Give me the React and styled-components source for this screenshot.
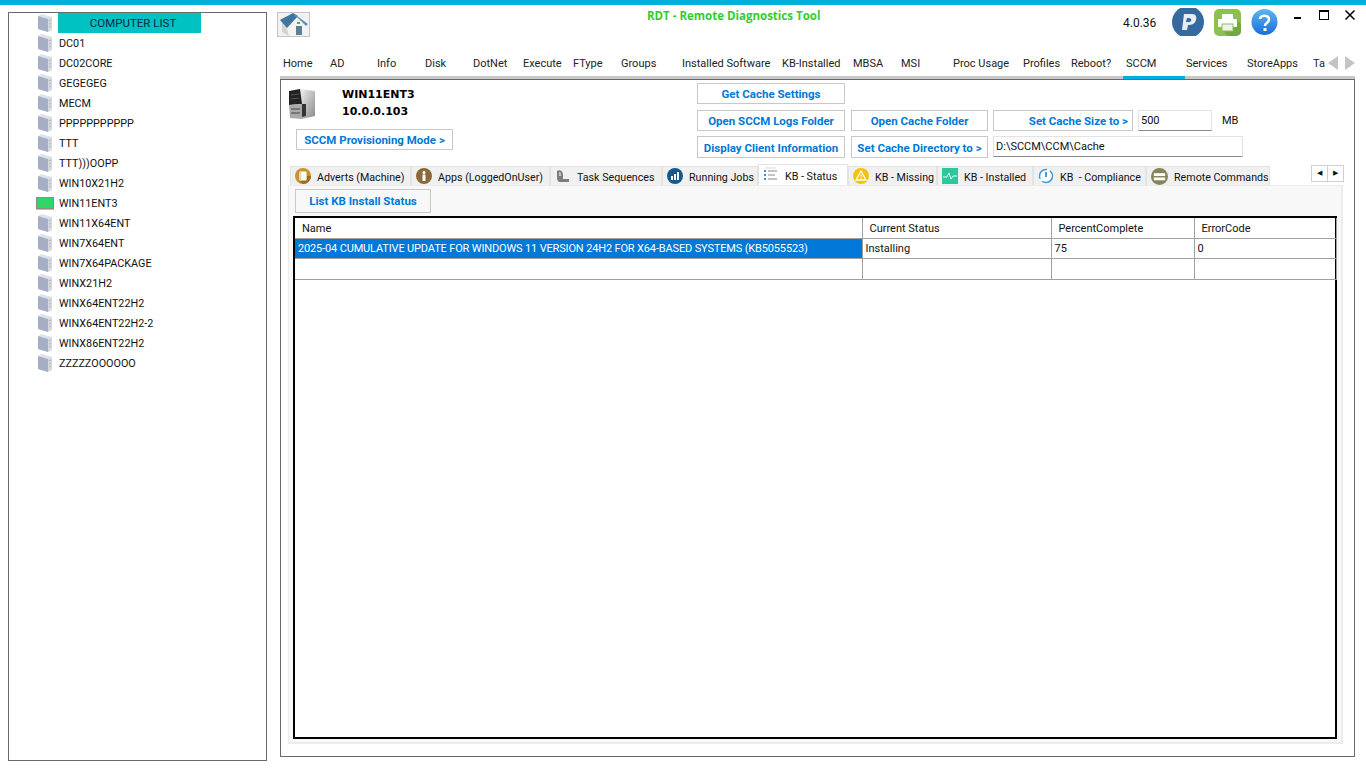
import React from 'react';
import styled, { createGlobalStyle } from 'styled-components';

const GlobalStyle = createGlobalStyle`
  html, body {
    margin: 0;
    height: 768px;
    overflow: hidden;
    background: #fff;
    font-family: Roboto, "Open Sans", sans-serif;
    font-size: 11px;
    color: #111;
  }
`;

const computers = [
  'DC01', 'DC02CORE', 'GEGEGEG', 'MECM', 'PPPPPPPPPPP', 'TTT', 'TTT)))OOPP', 'WIN10X21H2',
  'WIN11ENT3', 'WIN11X64ENT', 'WIN7X64ENT', 'WIN7X64PACKAGE', 'WINX21H2', 'WINX64ENT22H2',
  'WINX64ENT22H2-2', 'WINX86ENT22H2', 'ZZZZZOOOOOO',
];

const navTabs = [
  ['Home', 47, 6], ['AD', 47, 6], ['Info', 48, 6], ['Disk', 48, 6], ['DotNet', 50, 6],
  ['Execute', 50, 6], ['FType', 48, 6], ['Groups', 61, 6], ['Installed Software', 100, 6],
  ['KB-Installed', 71, 6], ['MBSA', 48, 6], ['MSI', 52, 6], ['Proc Usage', 70, 6],
  ['Profiles', 48, 6], ['Reboot?', 58, 6], ['SCCM', 62, 3], ['Services', 62, 1],
  ['StoreApps', 66, 0], ['Ta', 12, 0],
];

const Shell = styled.div`
  height: 768px;
  display: flex;
  flex-direction: column;
`;

const TopStrip = styled.div`
  height: 5px;
  flex: none;
  background: #00aedb;
`;

const Columns = styled.div`
  flex: 1;
  display: flex;
  padding: 7px 11px 7px 8px;
  min-height: 0;
`;

const ListPanel = styled.div`
  width: 229px;
  height: 747px;
  flex: none;
  border: 1px solid #696969;
  padding-left: 28px;
`;

const ListHeader = styled.div`
  display: flex;
  height: 20px;
  gap: 5px;
`;

const ListTitle = styled.div`
  width: 136px;
  padding-left: 7px;
  background: #00c2c2;
  text-align: center;
  line-height: 20px;
  font-size: 11.5px;
  color: #10283a;
`;

const ListRow = styled.div`
  display: flex;
  align-items: center;
  height: 20px;
  gap: 6px;
  font-size: 10.8px;
`;

const IconSlot = styled.span`
  width: 16px;
  height: 20px;
  flex: none;
  display: flex;
  align-items: center;
  justify-content: center;
  & svg {
    flex: none;
  }
`;

const Right = styled.div`
  flex: 1;
  margin-left: 10px;
  min-width: 0;
  display: flex;
  flex-direction: column;
`;

const Header = styled.div`
  height: 40px;
  flex: none;
  display: flex;
  align-items: flex-start;
`;

const HomeButton = styled.div`
  width: 33px;
  height: 25px;
  flex: none;
  border: 1px solid #c4c4c4;
  box-sizing: border-box;
  background: #f2f2f2;
`;

const Title = styled.div`
  margin-left: 337px;
  width: 173px;
  flex: none;
  color: #33cc33;
  font-family: "Open Sans", sans-serif;
  font-weight: 700;
  font-size: 11.5px;
  line-height: 20px;
  white-space: nowrap;
  margin-top: -6px;
`;

const Version = styled.div`
  margin-left: 303px;
  width: 49px;
  flex: none;
  font-size: 12px;
  line-height: 20px;
  margin-top: 1px;
`;

const ToolIcons = styled.div`
  display: flex;
  flex: none;
  gap: 10px;
  margin-top: -4px;
`;

const WindowButtons = styled.div`
  display: flex;
  flex: none;
  margin-left: 14px;
  gap: 14px;
  margin-top: -3px;
`;

const NavWrap = styled.div`
  height: 24px;
  display: flex;
  flex: none;
  border-bottom: 3px solid #c9c9c9;
  margin-left: 3px;
`;

const NavTrack = styled.div`
  width: 1048px;
  height: 27px;
  display: flex;
  margin-left: -3px;
`;

const NavTab = styled.div`
  flex: none;
  width: ${p => p.$w}px;
  height: 27px;
  box-sizing: border-box;
  padding: 1px 0 0 ${p => p.$pad}px;
  line-height: 21px;
  font-size: 11px;
  white-space: nowrap;
  color: #222;
  border-bottom: ${p => (p.$active ? '3px solid #00aedb' : 'none')};
`;

const NavArrows = styled.div`
  display: flex;
  gap: 7px;
  padding-top: 4px;
  margin-left: 3px;
`;

const Panel = styled.div`
  margin-left: 3px;
  height: 676px;
  border: 1px solid #696969;
  display: flex;
  flex-direction: column;
`;

const PanelHead = styled.div`
  height: 84px;
  flex: none;
  display: flex;
`;

const HostBlock = styled.div`
  width: 416px;
  flex: none;
  padding: 8px 0 0 8px;
  box-sizing: border-box;
`;

const HostRow = styled.div`
  display: flex;
  gap: 27px;
  height: 41px;
`;

const HostText = styled.div`
  font-family: "DejaVu Sans", sans-serif;
  font-weight: 700;
  font-size: 11px;
  line-height: 17px;
  color: #000;
  margin-top: -2px;
`;

const ActionButton = styled.button`
  height: ${p => (p.$tall ? 22 : 21)}px;
  width: ${p => (p.$first ? '148px' : 'auto')};
  box-sizing: border-box;
  background: ${p => p.$bg || '#fff'};
  border: 1px solid #c8c8c8;
  color: #0078d7;
  font-family: Roboto, sans-serif;
  font-size: 11.5px;
  font-weight: 700;
  padding: ${p => (p.$tall ? '1px' : '0')} ${p => (p.$right ? '4px' : '0')} 0 0;
  text-align: ${p => (p.$right ? 'right' : 'center')};
  white-space: nowrap;
`;

const ProvisionButton = styled(ActionButton)`
  width: 157px;
  margin: 0 0 0 7px;
  display: block;
`;

const ButtonGrid = styled.div`
  display: grid;
  grid-template-columns: 149px 137px 140px 74px 26px;
  grid-template-rows: 27px 26px 22px;
  column-gap: 5px;
  padding-top: 3px;
  align-items: start;
`;

const GridSpacer = styled.div`
  grid-column: 2 / -1;
`;

const TextField = styled.div`
  height: 21px;
  box-sizing: border-box;
  border: 1px solid #e3e3e3;
  border-bottom: 1px solid #8a8a8a;
  padding-left: 2px;
  line-height: 20px;
  background: #fff;
  grid-column: ${p => p.$span || 'auto'};
`;

const Unit = styled.div`
  padding: 4px 0 0 5px;
  white-space: nowrap;
`;

const Tabs = styled.div`
  height: 21px;
  flex: none;
  display: flex;
  align-items: flex-end;
  padding-left: 9px;
`;

const Tab = styled.div`
  width: ${p => p.$w}px;
  flex: none;
  box-sizing: border-box;
  height: ${p => (p.$active ? 21 : 19)}px;
  background: ${p => (p.$active ? '#fff' : '#f0f0f0')};
  border: 1px solid #e3e3e3;
  border-bottom: none;
  display: flex;
  align-items: center;
  gap: 6px;
  padding: 2px 0 0 4px;
  font-size: 10.7px;
  white-space: pre;
  color: #111;
  & svg {
    flex: none;
    margin-top: -2px;
  }
`;

const Scroller = styled.div`
  display: flex;
  margin: 0 0 3px 41px;
  height: 15px;
  border: 1px solid #cfcfcf;
  background: #fff;
`;

const ScrollCell = styled.div`
  width: 15px;
  display: flex;
  align-items: center;
  justify-content: center;
  font-size: 7px;
  line-height: 1;
  & + & {
    border-left: 1px solid #cfcfcf;
  }
`;

const TabPage = styled.div`
  margin-left: 7px;
  width: 1055px;
  height: 559px;
  box-sizing: border-box;
  background: #f8f8f8;
  border: 1px solid #ececec;
  border-width: 1px 2px 2px 1px;
  padding: 3px 4px 3px 4px;
  display: flex;
  flex-direction: column;
`;

const ListButton = styled(ActionButton)`
  width: 136px;
  height: 24px;
  margin-left: 2px;
  flex: none;
`;

const GridFrame = styled.div`
  margin-top: 3px;
  flex: 1;
  border: 2px solid #000;
  background: #fff;
  min-height: 0;
`;

const DataTable = styled.table`
  border-collapse: collapse;
  table-layout: fixed;
  width: 1041px;
  font-size: 11px;
`;

const Th = styled.th`
  width: ${p => p.$w}px;
  height: 20px;
  box-sizing: border-box;
  padding: 1px 0 0 7px;
  text-align: left;
  font-weight: 400;
  border-right: 1px solid #a0a0a0;
  border-bottom: 1px solid #a0a0a0;
  white-space: nowrap;
`;

const Td = styled.td`
  height: ${p => (p.$tall ? 21 : 20)}px;
  padding: 1px 0 0 3px;
  box-sizing: border-box;
  background: ${p => (p.$selected ? '#0078d7' : 'transparent')};
  color: ${p => (p.$selected ? '#fff' : '#111')};
  letter-spacing: ${p => (p.$selected ? '-0.15px' : '0')};
  border-right: 1px solid #a0a0a0;
  border-bottom: 1px solid #a0a0a0;
  white-space: nowrap;
  overflow: hidden;
`;

const ServerIcon = () => (
  <svg width="16" height="20" viewBox="0 0 16 20">
    <path d="M1 3 L5 1 L15 4 L15 17 L11 19 L1 16 Z" fill="#dfe3ea" />
    <path d="M1 3 L11 6 L11 19 L1 16 Z" fill="#a5aec4" />
    <path d="M11 6 L15 4 L15 17 L11 19 Z" fill="#d5d9de" />
    <path d="M12 8 L14 7 M12 11 L14 10 M12 14 L14 13" stroke="#b5b9c0" />
  </svg>
);

const ActiveIcon = () => (
  <svg width="18" height="13" viewBox="0 0 18 13">
    <rect x="0.5" y="0.5" width="17" height="11" fill="#2fd66a" stroke="#8d8d80" />
    <path d="M0 12.5 H18" stroke="#bdbdb5" />
  </svg>
);

const HomeIcon = () => (
  <svg width="31" height="23" viewBox="0 0 31 23">
    <path d="M4 9 L9 15 L11 23 L4 19 Z" fill="#d4d4d0" />
    <path d="M9 15 L20 5 L28 12 L27 22 L11 23 Z" fill="#f4f4f0" />
    <path d="M2 7 L15 0 L20 3 L9 15 Z" fill="#3f76a0" />
    <path d="M15 0 L30 11 L28 13 L20 5 L17 3 Z" fill="#5d8fb5" />
    <rect x="18" y="13" width="6" height="9" fill="#5c7f93" />
    <rect x="19" y="9" width="3" height="2" fill="#4caf50" />
  </svg>
);

const TowerIcon = () => (
  <svg width="26" height="32" viewBox="0 0 26 32">
    <defs>
      <linearGradient id="towerSide" x1="0" y1="0" x2="1" y2="1">
        <stop offset="0" stopColor="#f2f2f2" />
        <stop offset="1" stopColor="#8a8a8a" />
      </linearGradient>
    </defs>
    <path d="M11 1 L26 3 L26 28 L13 31 Z" fill="url(#towerSide)" />
    <path d="M0 3 L11 1 L13 16 L0 17 Z" fill="#222" />
    <path d="M0 17 L13 16 L13 31 L1 30 Z" fill="#aaa" />
    <path d="M2 21 L11 21 M2 25 L11 25" stroke="#444" />
    <path d="M2 7 L10 6 M2 11 L10 10" stroke="#555" />
    <path d="M13 16 H17 V28 L13 29 Z" fill="#333" />
  </svg>
);

const PaypalIcon = () => (
  <svg width="32" height="28" viewBox="0 1 32 28">
    <circle cx="16" cy="15" r="16" fill="#366a9f" />
    <path d="M12 7 H20 C24 7 25 10 24 13 C23 17 20 18 16 18 L15 23 H10 Z M15 11 L14 15 H17 C20 15 20 11 17 11 Z" fill="#e8edf3" fillRule="evenodd" />
  </svg>
);

const PrinterIcon = () => (
  <svg width="27" height="28" viewBox="0 -1 27 28">
    <rect width="27" height="27" rx="5" fill="#8cc152" />
    <path d="M22 10 L27 15 V22 A5 5 0 0 1 22 27 H14 L7 20 Z" fill="#74a843" />
    <rect x="8" y="5" width="11" height="5" fill="#fff" />
    <rect x="4" y="10" width="19" height="8" rx="1" fill="#fff" />
    <rect x="8" y="15" width="11" height="7" fill="#eef2ea" stroke="#8cc152" />
  </svg>
);

const HelpIcon = () => (
  <svg width="27" height="28" viewBox="0 -1 27 28">
    <defs>
      <linearGradient id="helpBlue" x1="0" y1="0" x2="0" y2="1">
        <stop offset="0" stopColor="#5db5f0" />
        <stop offset="1" stopColor="#1a6fd8" />
      </linearGradient>
    </defs>
    <circle cx="13.5" cy="13" r="13" fill="url(#helpBlue)" />
    <path d="M9 10 C9 5.5 18 5.500 18 10.500 C18 14 14 13.500 14 17" fill="none" stroke="#fff" strokeWidth="2.600" />
    <rect x="12.500" y="19" width="3" height="3" fill="#fff" />
  </svg>
);

const MinIcon = () => (
  <svg width="12" height="12" viewBox="0 0 12 12"><path d="M2 9 H9" stroke="#000" strokeWidth="2" /></svg>
);
const MaxIcon = () => (
  <svg width="12" height="12" viewBox="0 0 12 12"><rect x="1.500" y="1.500" width="9" height="9" fill="none" stroke="#000" /><path d="M1 2 H11" stroke="#000" strokeWidth="2" /></svg>
);
const CloseIcon = () => (
  <svg width="12" height="12" viewBox="0 0 12 12"><path d="M1.500 1.500 L10.500 10.500 M10.500 1.500 L1.500 10.500" stroke="#000" strokeWidth="1.500" /></svg>
);

const Arrow = ({ flip }) => (
  <svg width="10" height="14" viewBox="0 0 10 14">
    <path d={flip ? 'M0 0 L10 7 L0 14 Z' : 'M10 0 L0 7 L10 14 Z'} fill="#c4c4c4" />
  </svg>
);

const TabIcons = {
  advert: (
    <svg width="16" height="16" viewBox="0 0 16 16">
      <circle cx="8" cy="8" r="8" fill="#c8952b" />
      <path d="M8 16 A8 8 0 0 0 16 8 H12 V12 H4 A8 8 0 0 0 8 16 Z" fill="#9c6f1d" />
      <rect x="4.500" y="3.500" width="7" height="9" rx="1" fill="#fff" />
      <rect x="4.500" y="3.500" width="2" height="9" fill="#e6dcc8" />
    </svg>
  ),
  apps: (
    <svg width="16" height="16" viewBox="0 0 16 16">
      <circle cx="8" cy="8" r="8" fill="#8a6a3a" />
      <circle cx="8" cy="4.500" r="1.500" fill="#fff" />
      <rect x="6.500" y="6.500" width="3" height="6.500" fill="#fff" />
    </svg>
  ),
  task: (
    <svg width="16" height="14" viewBox="0 0 16 14">
      <path d="M2 2 C5 0 8 2 8 6 L8 10 L14 10 L14 13 L5 13 C3 13 2 11 2 9 Z" fill="#7d7d7d" />
      <path d="M4 3 C6 3 6 5 6 7 L4 7 Z" fill="#c9c9c9" />
    </svg>
  ),
  jobs: (
    <svg width="16" height="16" viewBox="0 0 16 16">
      <circle cx="8" cy="8" r="8" fill="#17598a" />
      <path d="M4 8 H6 V12 H4 Z M7 6 H9 V12 H7 Z M10 4 H12 V12 H10 Z" fill="#fff" />
    </svg>
  ),
  status: (
    <svg width="16" height="16" viewBox="0 0 16 16">
      <path d="M1 4 H3 M1 8 H3 M1 12 H3" stroke="#3a8fdc" strokeWidth="2" />
      <path d="M5 4 H14 M5 8 H12 M5 12 H14" stroke="#b0b0b0" strokeWidth="1.500" />
      <path d="M2 1 H13" stroke="#d8d8d8" />
    </svg>
  ),
  missing: (
    <svg width="16" height="16" viewBox="0 0 16 16">
      <circle cx="8" cy="8" r="8" fill="#f4c20d" />
      <path d="M8 3 L13 12 H3 Z" fill="none" stroke="#fff" strokeWidth="1.300" />
      <path d="M8 6.500 V9.500 M8 10.300 V11.300" stroke="#fff" />
    </svg>
  ),
  installed: (
    <svg width="16" height="16" viewBox="0 0 16 16">
      <rect width="16" height="16" fill="#2cc79a" />
      <path d="M1 9 H5 L7 5 L9 11 L11 8 H15" fill="none" stroke="#dff" />
    </svg>
  ),
  compliance: (
    <svg width="16" height="16" viewBox="0 0 16 16">
      <circle cx="8" cy="8" r="6.500" fill="#fff" stroke="#3a9ae0" strokeWidth="1.500" strokeDasharray="14 3" />
      <path d="M8 4 V9" stroke="#1a70b8" strokeWidth="1.500" />
    </svg>
  ),
  remote: (
    <svg width="17" height="17" viewBox="0 0 18 18">
      <circle cx="9" cy="9" r="9" fill="#86845a" />
      <rect x="3" y="5.500" width="12" height="3" fill="#fff" />
      <rect x="3" y="10" width="12" height="3" fill="#fff" />
    </svg>
  ),
};

const tabs = [
  ['Adverts (Machine)', 121, 'advert'],
  ['Apps (LoggedOnUser)', 139, 'apps'],
  ['Task Sequences', 112, 'task'],
  ['Running Jobs', 96, 'jobs'],
  ['KB - Status', 90, 'status', true],
  ['KB - Missing', 89, 'missing'],
  ['KB - Installed', 96, 'installed'],
  ['KB  - Compliance', 113, 'compliance'],
  ['Remote Commands', 124, 'remote'],
];

export default function App() {
  return (
    <Shell>
      <GlobalStyle />
      <TopStrip />
      <Columns>
        <ListPanel>
          <ListHeader>
            <IconSlot><ServerIcon /></IconSlot>
            <ListTitle>COMPUTER LIST</ListTitle>
          </ListHeader>
          {computers.map(name => (
            <ListRow key={name}>
              <IconSlot>{name === 'WIN11ENT3' ? <ActiveIcon /> : <ServerIcon />}</IconSlot>
              {name}
            </ListRow>
          ))}
        </ListPanel>
        <Right>
          <Header>
            <HomeButton><HomeIcon /></HomeButton>
            <Title>RDT - Remote Diagnostics Tool</Title>
            <Version>4.0.36</Version>
            <ToolIcons>
              <PaypalIcon />
              <PrinterIcon />
              <HelpIcon />
            </ToolIcons>
            <WindowButtons>
              <MinIcon />
              <MaxIcon />
              <CloseIcon />
            </WindowButtons>
          </Header>
          <NavWrap>
            <NavTrack>
              {navTabs.map(([label, w, pad]) => (
                <NavTab key={label} $w={w} $pad={pad} $active={label === 'SCCM'}>{label}</NavTab>
              ))}
            </NavTrack>
            <NavArrows>
              <Arrow />
              <Arrow flip />
            </NavArrows>
          </NavWrap>
          <Panel>
            <PanelHead>
              <HostBlock>
                <HostRow>
                  <TowerIcon />
                  <HostText>WIN11ENT3<br />10.0.0.103</HostText>
                </HostRow>
                <ProvisionButton>SCCM Provisioning Mode &gt;</ProvisionButton>
              </HostBlock>
              <ButtonGrid>
                <ActionButton $first>Get Cache Settings</ActionButton>
                <GridSpacer />
                <ActionButton $first>Open SCCM Logs Folder</ActionButton>
                <ActionButton>Open Cache Folder</ActionButton>
                <ActionButton $right>Set Cache Size to &gt;</ActionButton>
                <TextField>500</TextField>
                <Unit>MB</Unit>
                <ActionButton $first $tall>Display Client Information</ActionButton>
                <ActionButton $tall>Set Cache Directory to &gt;</ActionButton>
                <TextField $span="3 / span 3">D:\SCCM\CCM\Cache</TextField>
              </ButtonGrid>
            </PanelHead>
            <Tabs>
              {tabs.map(([label, w, icon, active]) => (
                <Tab key={label} $w={w} $active={active}>
                  {TabIcons[icon]}
                  {label}
                </Tab>
              ))}
              <Scroller>
                <ScrollCell>◀</ScrollCell>
                <ScrollCell>▶</ScrollCell>
              </Scroller>
            </Tabs>
            <TabPage>
              <ListButton $bg="#f8f8f8">List KB Install Status</ListButton>
              <GridFrame>
                <DataTable>
                  <thead>
                    <tr>
                      <Th $w={567}>Name</Th>
                      <Th $w={189}>Current Status</Th>
                      <Th $w={143}>PercentComplete</Th>
                      <Th $w={142}>ErrorCode</Th>
                    </tr>
                  </thead>
                  <tbody>
                    <tr>
                      <Td $selected>2025-04 CUMULATIVE UPDATE FOR WINDOWS 11 VERSION 24H2 FOR X64-BASED SYSTEMS (KB5055523)</Td>
                      <Td>Installing</Td>
                      <Td>75</Td>
                      <Td>0</Td>
                    </tr>
                    <tr>
                      <Td $tall>&nbsp;</Td>
                      <Td $tall />
                      <Td $tall />
                      <Td $tall />
                    </tr>
                  </tbody>
                </DataTable>
              </GridFrame>
            </TabPage>
          </Panel>
        </Right>
      </Columns>
    </Shell>
  );
}
